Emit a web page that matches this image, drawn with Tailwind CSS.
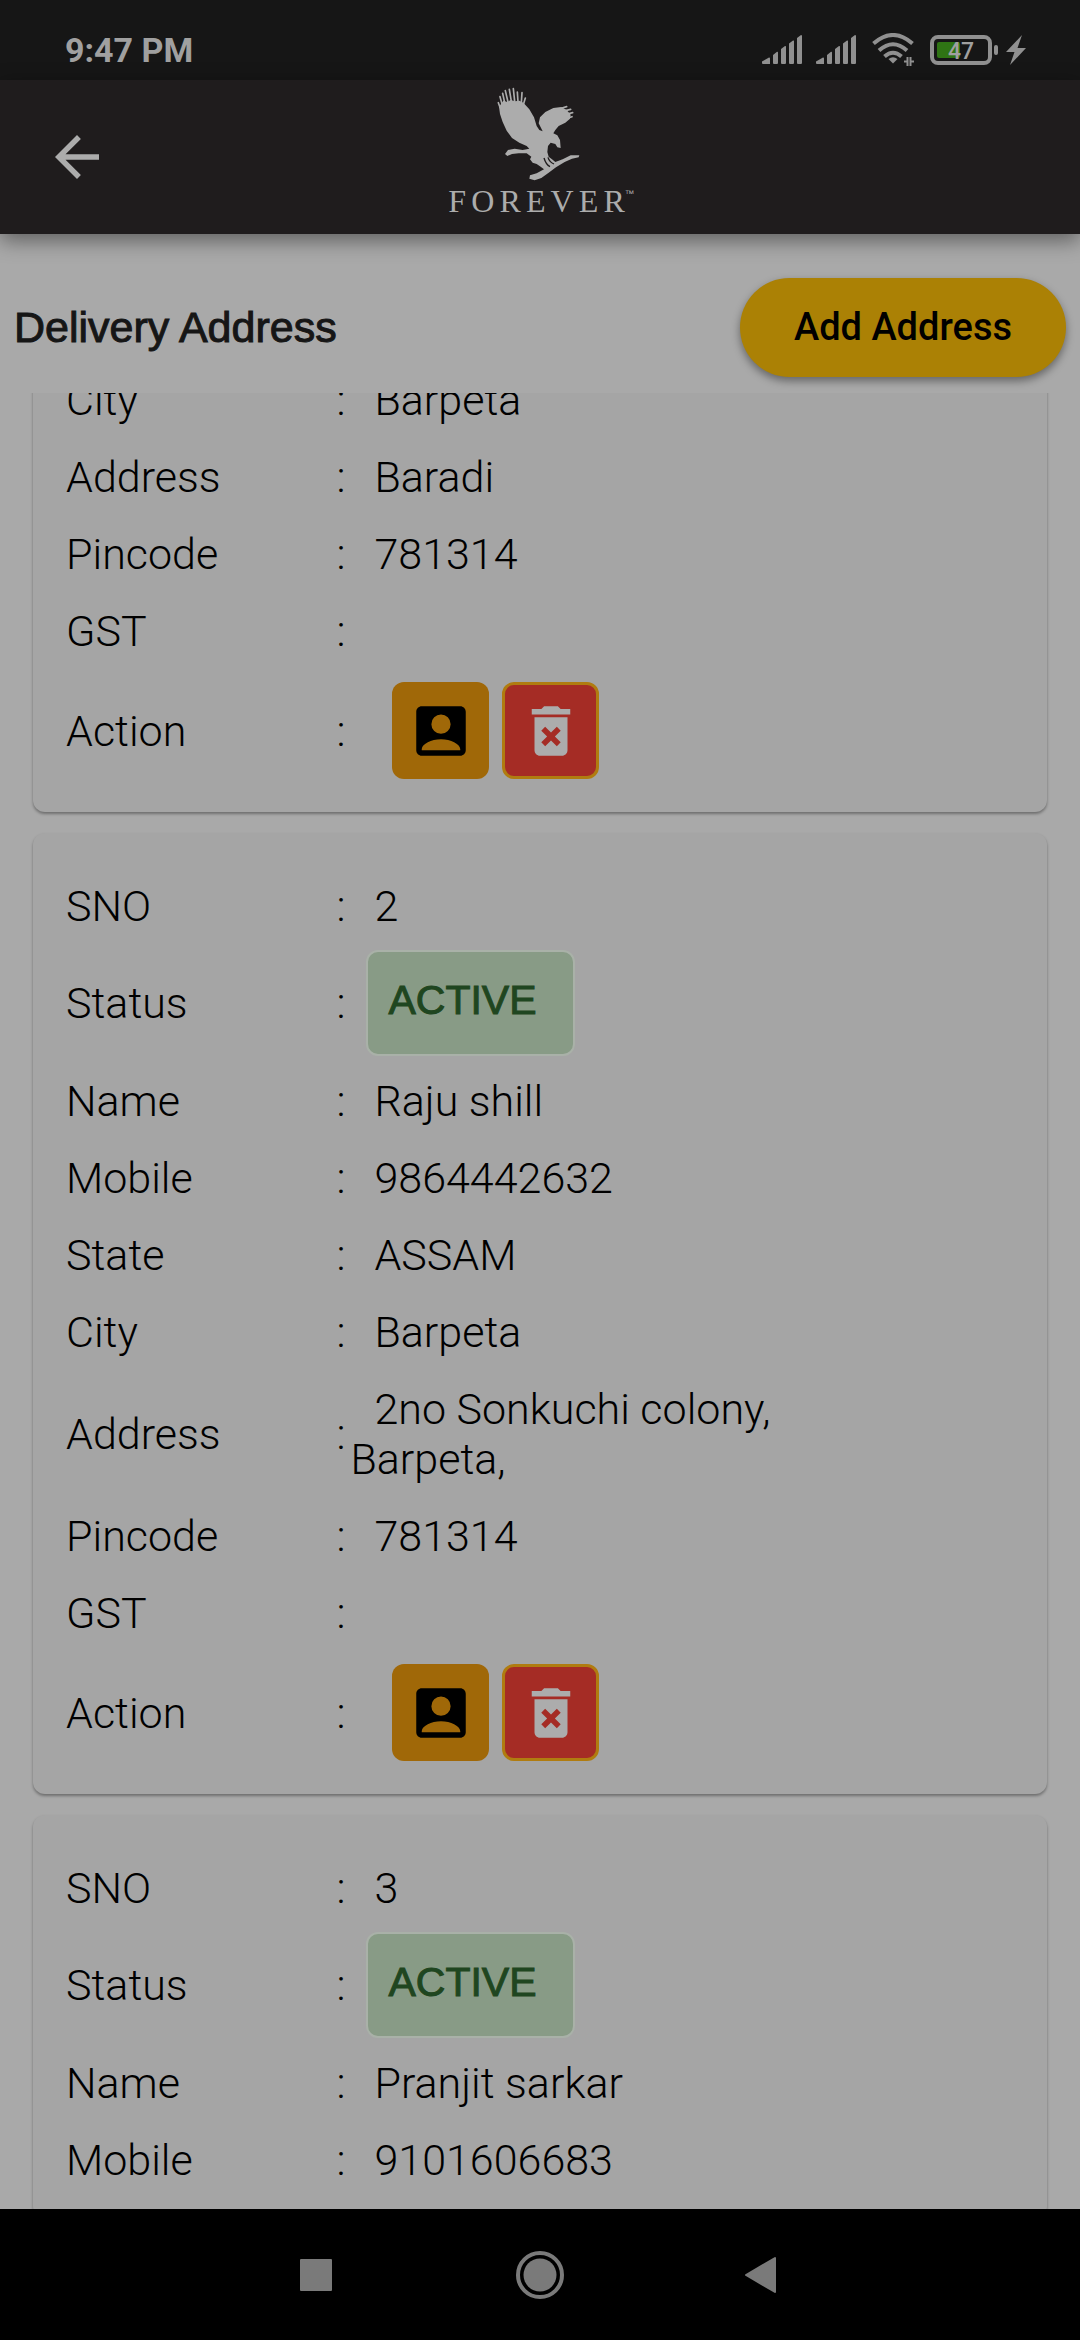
<!DOCTYPE html>
<html lang="en">
<head>
    <meta charset="UTF-8">
    <meta name="viewport" content="width=device-width, initial-scale=1.0">
    <title>Delivery Address</title>
    <script src="https://cdn.jsdelivr.net/npm/@tailwindcss/browser@4"></script>
</head>
<body class="h-screen flex flex-col overflow-hidden bg-[#a9a9a9] text-black font-[Roboto,sans-serif]">

    <!-- Icons shared by the cards and the status bar -->
    <svg class="hidden">
        <symbol id="signal" viewBox="0 0 40 30">
            <path d="M0 26.5L7 22.5Q8 22.3 8 23.5V29H1Q0 29 0 28ZM11 20L15 16.800Q16 16.500 16 17.500V28Q16 29 15 29H12Q11 29 11 28ZM19 14L23 11Q24 10.700 24 11.700V28Q24 29 23 29H20Q19 29 19 28ZM27 8.500L31 5.500Q32 5.200 32 6V28Q32 29 31 29H28Q27 29 27 28ZM35 3L39 0Q40 0 40 1V28Q40 29 39 29H36Q35 29 35 28Z"/>
        </symbol>
        <symbol id="account" viewBox="0 0 24 24">
            <path fill-rule="evenodd" d="M5 3h14c1.100 0 2 .9 2 2v14c0 1.100-.9 2-2 2H5c-1.100 0-2-.9-2-2V5c0-1.100.9-2 2-2zm7 3a3.500 3.500 0 1 0 0 7 3.500 3.500 0 0 0 0-7zM12 15c-3.600 0-6.800 1.700-7 3.500V19h14v-.5c-.2-1.800-3.400-3.500-7-3.500z"/>
        </symbol>
        <symbol id="delete" viewBox="0 0 24 24">
            <path d="M6 19c0 1.100.9 2 2 2h8c1.100 0 2-.9 2-2V7H6v12zm2.460-7.120l1.410-1.410L12 12.590l2.120-2.120 1.410 1.410L13.410 14l2.120 2.120-1.410 1.410L12 15.410l-2.120 2.120-1.410-1.410L10.590 14l-2.130-2.120zM15.500 4l-1-1h-5l-1 1H5v2h14V4h-3.500z"/>
        </symbol>
    </svg>

    <!-- Status Bar -->
    <div class="h-20 shrink-0 flex items-center justify-between pl-[65px] pr-[54px] pt-5 bg-[#161616] text-[#a0a0a0]">
        <span class="text-[34px] font-bold">9:47 PM</span>
        <div class="flex items-center">
            <svg class="w-10 h-[30px] mr-3.5" fill="#909090"><use href="#signal"/></svg>
            <svg class="w-10 h-[30px] mr-4" fill="#909090"><use href="#signal"/></svg>
            <svg class="w-[42px] h-[34px] mr-4" viewBox="0 0 42 34" fill="none" stroke="#909090" stroke-width="4">
                <path d="M1.500 10.500Q21-6.500 40.500 10.500M7 17.500Q21 5 35 17.500M12.500 23.500Q21 16 29.500 23.500"/>
                <path fill="#909090" stroke="none" d="M21 30.500L16.500 26Q21 22.500 25.500 26Z"/>
                <path stroke-width="2" d="M35.500 33V24M32 28.500H35.500M38.500 24V33M38.500 28.500H42"/>
            </svg>
            <svg class="w-[68px] h-[30px] mr-2" viewBox="0 0 68 30">
                <rect x="2" y="2" width="58" height="26" rx="6" fill="none" stroke="#909090" stroke-width="4"/>
                <rect x="7" y="7" width="23" height="16" rx="2" fill="#2f7414"/>
                <rect x="64" y="10" width="4" height="10" rx="2" fill="#909090"/>
                <text x="31" y="24" text-anchor="middle" font-family="Roboto" font-size="23" font-weight="500" fill="#a0a0a0">47</text>
            </svg>
            <svg class="w-5 h-[30px]" viewBox="0 0 20 30" fill="#909090"><path d="M16 0L0 17H8.500L4 30L20 13H11.500Z"/></svg>
        </div>
    </div>

    <!-- App Header -->
    <header class="relative z-10 h-[154px] shrink-0 grid grid-cols-[1fr_auto_1fr] items-center bg-[#1f1c1d] shadow-[0_6px_20px_rgba(0,0,0,0.45)]">
        <button aria-label="Back" class="ml-11 w-fit">
            <svg class="w-[66px] h-[66px]" viewBox="0 0 24 24" fill="#acacac"><path d="M20 11H7.830l5.590-5.590L12 4l-8 8 8 8 1.410-1.410L7.830 13H20v-2z"/></svg>
        </button>
        <svg class="w-[190px] h-36" viewBox="75 45 570 432" fill="#acacac" role="img" aria-label="Forever">
            <!-- eagle, then feather tips and talons -->
            <path d="M237 110L250 92L262 96L272 90L285 94L298 92L310 98L328 118L342 142L350 168L358 180L368 184L356 160L360 142L376 126L400 114L424 111L440 120L452 134L450 146L436 158L416 168L406 180L400 190L412 196L420 210L422 234L412 232L406 222L392 218L384 228L382 246L386 260L396 268L406 276L428 268L452 256L478 256L476 262L456 266L434 276L408 292L386 308L364 324L344 331L328 326L330 316L350 310L372 298L362 290L350 282L338 278L330 268L334 260L320 250L296 250L276 252L262 258L255 252L264 240L284 236L308 240L328 236L320 228L298 218L276 204L260 182L248 156L240 132Z"/>
            <path fill="none" stroke="#acacac" stroke-width="5" stroke-linecap="round" d="M240 112L235 98M246 102L240 80M254 98L248 70M264 96L256 62M274 94L268 58M284 94L280 56M294 96L292 66M304 98L306 68M310 104L316 84M426 114L440 110M436 122L452 118M442 132L458 128M444 144L456 140"/>
            <path fill="none" stroke="#1f1c1d" stroke-width="4" d="M372 264Q378 284 390 290M384 262Q388 276 402 282"/>
            <text x="85" y="425" class="tracking-[0.16em]" font-family="Liberation Serif" font-size="96">FOREVER</text>
            <text x="614" y="382" font-family="Liberation Sans" font-size="28">™</text>
        </svg>
    </header>

    <!-- Page Title -->
    <div class="shrink-0 flex items-center justify-between px-3.5 pt-11 pb-4">
        <h1 class="font-[Liberation_Sans,sans-serif] text-[43px] text-[#161616] [-webkit-text-stroke:1px_#161616]">Delivery Address</h1>
        <button class="h-[99px] px-[54px] rounded-full bg-[#ab8105] text-[38px] font-medium shadow-[0_4px_8px_rgba(0,0,0,0.4)]">Add Address</button>
    </div>

    <!-- Address Cards -->
    <main class="flex-1 min-h-0 overflow-hidden px-[33px] text-[43px] leading-[50px] font-light">

        <section class="-mt-8 mb-[21px] px-[33px] pb-5 rounded-xl bg-[#a5a5a5] shadow-[0_2px_3px_rgba(0,0,0,0.35)]">
            <table class="w-full table-fixed text-left">
                <tr class="h-[77px]"><th class="w-[28%] font-light">City</th><td class="w-[19px] text-center">:</td><td class="indent-6">Barpeta</td></tr>
                <tr class="h-[77px]"><th class="font-light">Address</th><td class="text-center">:</td><td class="indent-6">Baradi</td></tr>
                <tr class="h-[77px]"><th class="font-light">Pincode</th><td class="text-center">:</td><td class="indent-6">781314</td></tr>
                <tr class="h-[77px]"><th class="font-light">GST</th><td class="text-center">:</td><td></td></tr>
                <tr class="h-[123px]">
                    <th class="font-light">Action</th><td class="text-center">:</td>
                    <td>
                        <div class="flex gap-[13px] pl-[42px]">
                            <button aria-label="Select address" class="size-[97px] flex items-center justify-center rounded-xl bg-[#a06808]"><svg class="size-[66px]"><use href="#account"/></svg></button>
                            <button aria-label="Delete address" class="size-[97px] flex items-center justify-center rounded-xl border-3 border-[#b07c10] bg-[#a52c25]"><svg class="size-[66px]" fill="#acacac"><use href="#delete"/></svg></button>
                        </div>
                    </td>
                </tr>
            </table>
        </section>

        <section class="mb-[21px] px-[33px] pt-[34px] pb-5 rounded-xl bg-[#a5a5a5] shadow-[0_2px_3px_rgba(0,0,0,0.35)]">
            <table class="w-full table-fixed text-left">
                <tr class="h-[77px]"><th class="w-[28%] font-light">SNO</th><td class="w-[19px] text-center">:</td><td class="indent-6">2</td></tr>
                <tr class="h-[118px]">
                    <th class="font-light">Status</th><td class="text-center">:</td>
                    <td><div class="ml-4 w-fit h-[106px] flex items-center pl-5 pr-9 pb-1.5 rounded-xl border-2 border-[#a9b1a8] bg-[#889b86] text-[#1f4620] font-[Liberation_Sans,sans-serif] text-[41px] font-normal [-webkit-text-stroke:1px_#1f4620]">ACTIVE</div></td>
                </tr>
                <tr class="h-[77px]"><th class="font-light">Name</th><td class="text-center">:</td><td class="indent-6">Raju shill</td></tr>
                <tr class="h-[77px]"><th class="font-light">Mobile</th><td class="text-center">:</td><td class="indent-6">9864442632</td></tr>
                <tr class="h-[77px]"><th class="font-light">State</th><td class="text-center">:</td><td class="indent-6">ASSAM</td></tr>
                <tr class="h-[77px]"><th class="font-light">City</th><td class="text-center">:</td><td class="indent-6">Barpeta</td></tr>
                <tr class="h-[127px]"><th class="font-light">Address</th><td class="text-center">:</td><td class="indent-6 pr-48">2no Sonkuchi colony, Barpeta,</td></tr>
                <tr class="h-[77px]"><th class="font-light">Pincode</th><td class="text-center">:</td><td class="indent-6">781314</td></tr>
                <tr class="h-[77px]"><th class="font-light">GST</th><td class="text-center">:</td><td></td></tr>
                <tr class="h-[123px]">
                    <th class="font-light">Action</th><td class="text-center">:</td>
                    <td>
                        <div class="flex gap-[13px] pl-[42px]">
                            <button aria-label="Select address" class="size-[97px] flex items-center justify-center rounded-xl bg-[#a06808]"><svg class="size-[66px]"><use href="#account"/></svg></button>
                            <button aria-label="Delete address" class="size-[97px] flex items-center justify-center rounded-xl border-3 border-[#b07c10] bg-[#a52c25]"><svg class="size-[66px]" fill="#acacac"><use href="#delete"/></svg></button>
                        </div>
                    </td>
                </tr>
            </table>
        </section>

        <section class="px-[33px] pt-[34px] pb-5 rounded-xl bg-[#a5a5a5] shadow-[0_2px_3px_rgba(0,0,0,0.35)]">
            <table class="w-full table-fixed text-left">
                <tr class="h-[77px]"><th class="w-[28%] font-light">SNO</th><td class="w-[19px] text-center">:</td><td class="indent-6">3</td></tr>
                <tr class="h-[118px]">
                    <th class="font-light">Status</th><td class="text-center">:</td>
                    <td><div class="ml-4 w-fit h-[106px] flex items-center pl-5 pr-9 pb-1.5 rounded-xl border-2 border-[#a9b1a8] bg-[#889b86] text-[#1f4620] font-[Liberation_Sans,sans-serif] text-[41px] font-normal [-webkit-text-stroke:1px_#1f4620]">ACTIVE</div></td>
                </tr>
                <tr class="h-[77px]"><th class="font-light">Name</th><td class="text-center">:</td><td class="indent-6">Pranjit sarkar</td></tr>
                <tr class="h-[77px]"><th class="font-light">Mobile</th><td class="text-center">:</td><td class="indent-6">9101606683</td></tr>
            </table>
        </section>
    </main>

    <!-- System Navigation -->
    <nav class="relative h-[131px] shrink-0 flex items-center justify-center gap-[174px] bg-black">
        <button aria-label="Recent apps"><svg class="size-12" viewBox="0 0 48 48" fill="#7a7a7a"><rect x="6" y="8" width="32" height="32" rx="1"/></svg></button>
        <button aria-label="Home">
            <svg class="size-12" viewBox="0 0 48 48" fill="#7a7a7a"><circle cx="24" cy="24" r="22" fill="none" stroke="#7a7a7a" stroke-width="4"/><circle cx="24" cy="24" r="16.500"/></svg>
        </button>
        <button aria-label="Back"><svg class="size-12" viewBox="0 0 48 48" fill="#7a7a7a" stroke="#7a7a7a" stroke-width="2" stroke-linejoin="round"><path d="M8 24L37 7V41Z"/></svg></button>
    </nav>

</body>
</html>
